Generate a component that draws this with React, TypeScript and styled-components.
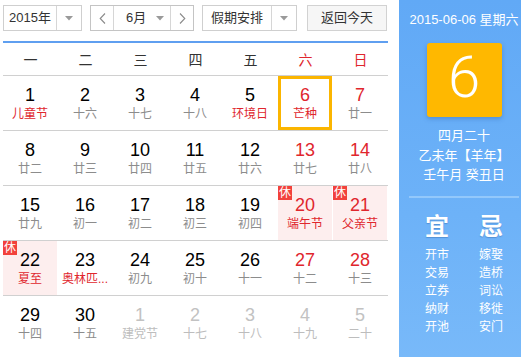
import React from 'react';
import styled, { createGlobalStyle } from 'styled-components';

const GlobalStyle = createGlobalStyle`
  html, body {
    margin: 0;
    padding: 0;
    background: #fff;
  }
  body {
    font-family: "Liberation Sans", "Noto Sans CJK SC", sans-serif;
    color: #333;
  }
`;

type Day = {
  d: number;
  l: string;
  fest?: boolean;
  rest?: boolean;
  sel?: boolean;
  other?: boolean;
};

const WEEKDAYS = ['一', '二', '三', '四', '五', '六', '日'];

const WEEKS: Day[][] = [
  [
    { d: 1, l: '儿童节', fest: true },
    { d: 2, l: '十六' },
    { d: 3, l: '十七' },
    { d: 4, l: '十八' },
    { d: 5, l: '环境日', fest: true },
    { d: 6, l: '芒种', fest: true, sel: true },
    { d: 7, l: '廿一' },
  ],
  [
    { d: 8, l: '廿二' },
    { d: 9, l: '廿三' },
    { d: 10, l: '廿四' },
    { d: 11, l: '廿五' },
    { d: 12, l: '廿六' },
    { d: 13, l: '廿七' },
    { d: 14, l: '廿八' },
  ],
  [
    { d: 15, l: '廿九' },
    { d: 16, l: '初一' },
    { d: 17, l: '初二' },
    { d: 18, l: '初三' },
    { d: 19, l: '初四' },
    { d: 20, l: '端午节', fest: true, rest: true },
    { d: 21, l: '父亲节', fest: true, rest: true },
  ],
  [
    { d: 22, l: '夏至', fest: true, rest: true },
    { d: 23, l: '奥林匹...', fest: true },
    { d: 24, l: '初九' },
    { d: 25, l: '初十' },
    { d: 26, l: '十一' },
    { d: 27, l: '十二' },
    { d: 28, l: '十三' },
  ],
  [
    { d: 29, l: '十四' },
    { d: 30, l: '十五' },
    { d: 1, l: '建党节', other: true },
    { d: 2, l: '十七', other: true },
    { d: 3, l: '十八', other: true },
    { d: 4, l: '十九', other: true },
    { d: 5, l: '二十', other: true },
  ],
];

const YI = ['开市', '交易', '立券', '纳财', '开池'];
const JI = ['嫁娶', '造桥', '词讼', '移徙', '安门'];

const Caret = () => (
  <svg width="8" height="5" viewBox="0 0 8 5">
    <path d="M0 0 L8 0 L4 4.5 Z" fill="#9a9a9a" />
  </svg>
);

const Chevron = ({ dir }: { dir: 'left' | 'right' }) => (
  <svg width="7" height="11" viewBox="0 0 7 11">
    <path
      d={dir === 'left' ? 'M6 0.5 L1.2 5.5 L6 10.5' : 'M1 0.5 L5.8 5.5 L1 10.5'}
      fill="none"
      stroke="#8a8a8a"
      strokeWidth="1.1"
    />
  </svg>
);

export default function App() {
  return (
    <>
      <GlobalStyle />
      <Wrapper>
        <Main>
          <Toolbar>
            <SelectBox width={79}>
              <SelectLabel>2015年</SelectLabel>
              <CaretCell>
                <Caret />
              </CaretCell>
            </SelectBox>
            <MonthGroup>
              <NavCell>
                <Chevron dir="left" />
              </NavCell>
              <MonthLabel>
                <span>6月</span>
                <Caret />
              </MonthLabel>
              <NavCell side="right">
                <Chevron dir="right" />
              </NavCell>
            </MonthGroup>
            <SelectBox width={95}>
              <SelectLabel>假期安排</SelectLabel>
              <CaretCell>
                <Caret />
              </CaretCell>
            </SelectBox>
            <TodayButton>返回今天</TodayButton>
          </Toolbar>

          <HeaderRow>
            {WEEKDAYS.map((w, i) => (
              <WeekdayCell key={w} weekend={i >= 5}>
                {w}
              </WeekdayCell>
            ))}
          </HeaderRow>

          {WEEKS.map((week, r) => (
            <WeekRow key={r} last={r === WEEKS.length - 1}>
              {week.map((day, i) => {
                const tone = day.other ? 'other' : i >= 5 || day.sel ? 'red' : 'normal';
                return (
                  <DayCell key={i} rest={!!day.rest} selected={!!day.sel}>
                    {day.rest && <RestBadge>休</RestBadge>}
                    <DayNumber tone={tone}>{day.d}</DayNumber>
                    <Lunar tone={day.other ? 'other' : day.fest ? 'red' : 'normal'}>{day.l}</Lunar>
                  </DayCell>
                );
              })}
            </WeekRow>
          ))}
        </Main>

        <Side>
          <DateLine>2015-06-06 星期六</DateLine>
          <BigDay>6</BigDay>
          <LunarInfo>
            <div>四月二十</div>
            <div>乙未年【羊年】</div>
            <div>壬午月 癸丑日</div>
          </LunarInfo>
          <Divider />
          <Advice>
            <AdviceColumn>
              <AdviceTitle>宜</AdviceTitle>
              {YI.map((t) => (
                <AdviceItem key={t}>{t}</AdviceItem>
              ))}
            </AdviceColumn>
            <AdviceColumn>
              <AdviceTitle>忌</AdviceTitle>
              {JI.map((t) => (
                <AdviceItem key={t}>{t}</AdviceItem>
              ))}
            </AdviceColumn>
          </Advice>
        </Side>
      </Wrapper>
    </>
  );
}

const Wrapper = styled.div`
  display: flex;
  width: 521px;
  height: 357px;
  overflow: hidden;
`;

const Main = styled.div`
  width: 399px;
  box-sizing: border-box;
  padding: 5px 11px 0 3px;
`;

const Toolbar = styled.div`
  display: flex;
  align-items: center;
  height: 26px;
  margin-bottom: 10px;
  font-size: 13px;
  color: #333;
`;

const SelectBox = styled.div<{ width: number }>`
  display: flex;
  width: ${(p) => p.width}px;
  height: 26px;
  box-sizing: border-box;
  border: 1px solid #cfcfcf;
  background: #fff;
  margin-right: 8px;
`;

const SelectLabel = styled.div`
  flex: 1;
  display: flex;
  align-items: center;
  justify-content: center;
  line-height: 24px;
`;

const CaretCell = styled.div`
  width: 24px;
  display: flex;
  align-items: center;
  justify-content: center;
  border-left: 1px solid #d6d6d6;
`;

const MonthGroup = styled.div`
  display: flex;
  width: 104px;
  height: 26px;
  box-sizing: border-box;
  border: 1px solid #c4c4c4;
  background: #fff;
  margin-right: 8px;
`;

const NavCell = styled.div<{ side?: 'left' | 'right' }>`
  width: 22px;
  display: flex;
  align-items: center;
  justify-content: center;
  border-${(p) => (p.side === 'right' ? 'left' : 'right')}: 1px solid #d6d6d6;
`;

const MonthLabel = styled.div`
  flex: 1;
  display: flex;
  align-items: center;
  justify-content: space-between;
  padding: 0 6px 0 12px;
  line-height: 24px;
`;

const TodayButton = styled.div`
  width: 80px;
  height: 26px;
  box-sizing: border-box;
  border: 1px solid #d2d2d2;
  background: #f6f6f6;
  margin-left: 2px;
  display: flex;
  align-items: center;
  justify-content: center;
  line-height: 24px;
`;

const HeaderRow = styled.div`
  display: grid;
  grid-template-columns: repeat(7, 55px);
  height: 32px;
  border-top: 2px solid #5f9ff0;
  border-bottom: 1px solid #d0d0d0;
`;

const WeekdayCell = styled.div<{ weekend: boolean }>`
  display: flex;
  align-items: center;
  justify-content: center;
  font-size: 14px;
  color: ${(p) => (p.weekend ? '#e0262d' : '#333')};
`;

const WeekRow = styled.div<{ last: boolean }>`
  display: grid;
  grid-template-columns: repeat(7, 55px);
  height: 54px;
  border-bottom: 1px solid ${(p) => (p.last ? 'transparent' : '#d0d0d0')};
`;

const DayCell = styled.div<{ rest: boolean; selected: boolean }>`
  position: relative;
  width: 54px;
  height: 54px;
  box-sizing: border-box;
  display: flex;
  flex-direction: column;
  align-items: center;
  padding-top: ${(p) => (p.selected ? 6 : 9)}px;
  background: ${(p) => (p.rest ? '#fdeeee' : 'transparent')};
  border: ${(p) => (p.selected ? '3px solid #fbb500' : 'none')};
`;

const RestBadge = styled.div`
  position: absolute;
  top: 0;
  left: 0;
  width: 14px;
  height: 14px;
  background: #f2413b;
  color: #fff;
  font-size: 12px;
  line-height: 14px;
  text-align: center;
`;

const toneColor = {
  normal: '#000',
  red: '#e0262d',
  other: '#c2c2c2',
};

const DayNumber = styled.div<{ tone: 'normal' | 'red' | 'other' }>`
  font-family: "Liberation Sans", Arial, sans-serif;
  font-size: 18px;
  line-height: 20px;
  color: ${(p) => toneColor[p.tone]};
`;

const Lunar = styled.div<{ tone: 'normal' | 'red' | 'other' }>`
  font-size: 12px;
  line-height: 18px;
  white-space: nowrap;
  color: ${(p) => (p.tone === 'red' ? '#e0262d' : p.tone === 'other' ? '#bdbdbd' : '#8c8c8c')};
`;

const Side = styled.div`
  width: 122px;
  height: 357px;
  box-sizing: border-box;
  padding: 12px 0 0 8px;
  background: linear-gradient(180deg, #61a9f6 0%, #6db2f8 60%, #78b9f9 100%);
  color: #fff;
  display: flex;
  flex-direction: column;
  align-items: center;
`;

const DateLine = styled.div`
  font-size: 13px;
  line-height: 16px;
  white-space: nowrap;
`;

const BigDay = styled.div`
  margin-top: 15px;
  width: 75px;
  height: 74px;
  border-radius: 3px;
  background: #ffb800;
  box-shadow: 0 2px 4px rgba(40, 90, 160, 0.35);
  display: flex;
  align-items: center;
  justify-content: center;
  font-family: Roboto, "Liberation Sans", sans-serif;
  font-weight: 300;
  font-size: 58px;
  line-height: 1;
  padding-bottom: 6px;
  box-sizing: border-box;
`;

const LunarInfo = styled.div`
  margin-top: 9px;
  font-size: 13px;
  line-height: 19.5px;
  text-align: center;
  white-space: nowrap;
`;

const Divider = styled.div`
  align-self: stretch;
  margin: 11px 2px 0 2px;
  height: 2px;
  background: #93c8fb;
`;

const Advice = styled.div`
  display: flex;
  gap: 30px;
  margin-top: 14px;
`;

const AdviceColumn = styled.div`
  display: flex;
  flex-direction: column;
  align-items: center;
`;

const AdviceTitle = styled.div`
  font-size: 24px;
  line-height: 30px;
  font-weight: bold;
  margin-bottom: 4px;
  text-shadow: 0 1px 1px rgba(30, 80, 150, 0.35);
`;

const AdviceItem = styled.div`
  font-size: 12px;
  line-height: 18px;
`;
